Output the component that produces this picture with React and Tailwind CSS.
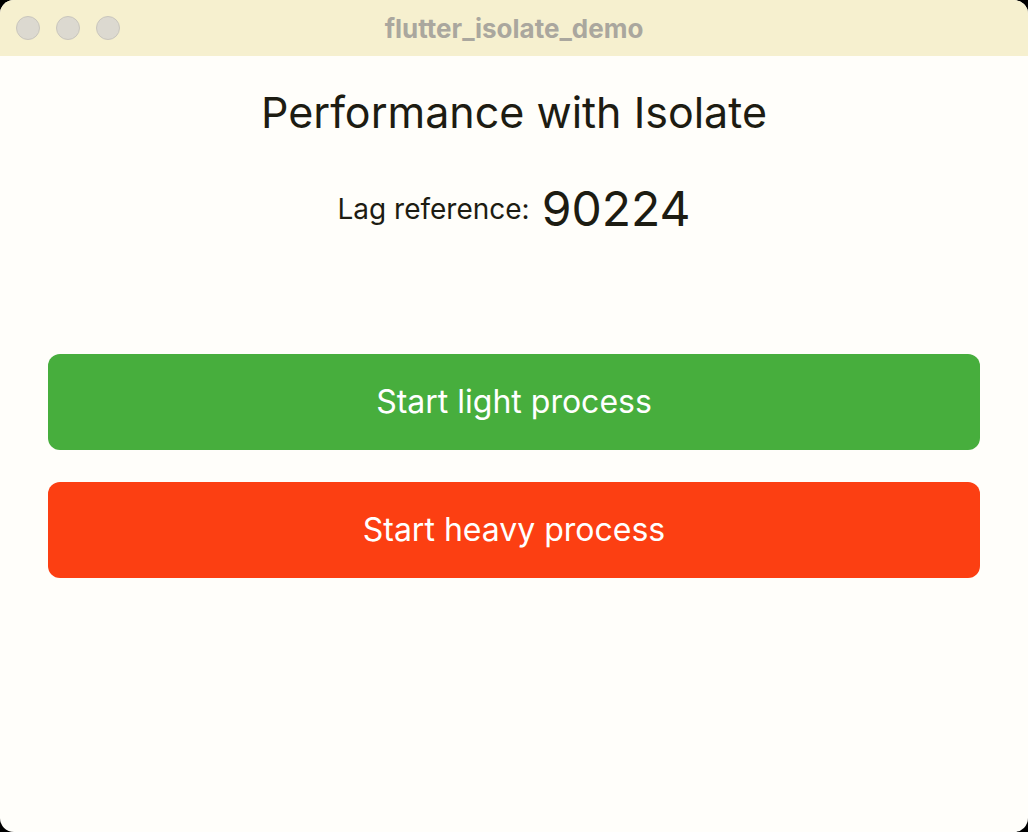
import React from "react";

const TrafficLight = () => (
  <span className="h-6 w-6 rounded-full border border-[#c9c6bd] bg-[#dcd9d0]" />
);

const App = () => {
  return (
    <div
      className="h-[832px] w-[1028px] bg-black"
      style={{ fontFamily: "Inter, 'Noto Sans', sans-serif" }}
    >
      <div className="flex h-full w-full flex-col overflow-hidden rounded-[14px] bg-[#fffefa]">
        {/* title bar */}
        <div className="relative flex h-[56px] items-center bg-[#f6f0cf] px-4">
          <div className="flex items-center gap-4">
            <TrafficLight />
            <TrafficLight />
            <TrafficLight />
          </div>
          <span className="absolute left-0 right-0 text-center text-[26px] font-bold text-[#aaa79e]">
            flutter_isolate_demo
          </span>
        </div>

        {/* body */}
        <div className="flex flex-col items-center px-12">
          <h1 className="mt-[29px] text-[43px] leading-[54px] text-[#1d1c12]">
            Performance with Isolate
          </h1>
          <div className="mt-[42px] flex h-[56px] items-center gap-3 text-[#1d1c12]">
            <span className="text-[28px] leading-[56px]">Lag reference:</span>
            <span className="text-[48px] leading-[56px]">90224</span>
          </div>

          <button className="mt-[117px] h-[96px] w-full rounded-xl bg-[#47ae3d] text-[32px] text-white">
            Start light process
          </button>
          <button className="mt-[32px] h-[96px] w-full rounded-xl bg-[#fc3f12] text-[32px] text-white">
            Start heavy process
          </button>
        </div>
      </div>
    </div>
  );
};

export default App;
